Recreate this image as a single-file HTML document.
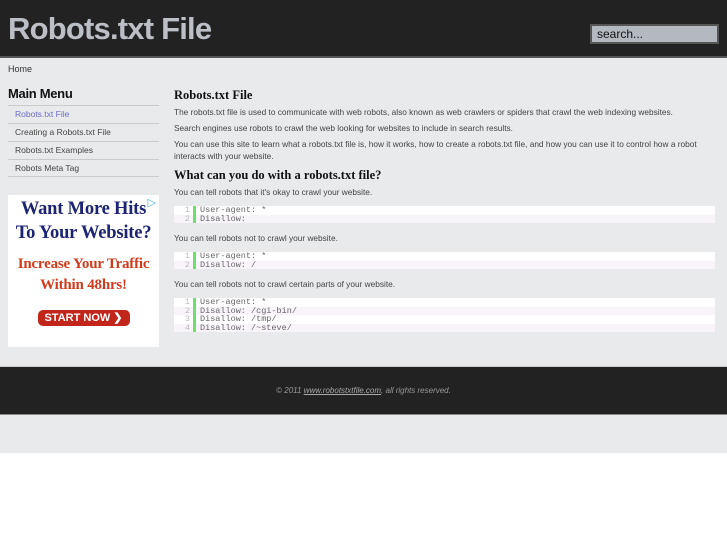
<!DOCTYPE html>
<html><head><style>
*{margin:0;padding:0;box-sizing:border-box}
body{width:727px;height:545px;background:#fff;font-family:"Liberation Sans",sans-serif;position:relative;overflow:hidden}
#hd{position:absolute;left:0;top:0;width:727px;height:58px;background:#222;border-bottom:2px solid #555}
#hd h1{position:absolute;left:8px;top:11px;font-size:31px;color:#bcc0c6;font-weight:bold;letter-spacing:-0.8px}
#srch{position:absolute;left:590px;top:24px;width:129px;height:20px;background:#b4b8bf;border:2px solid #555;font-size:12px;color:#111;padding:1px 5px}
#main{position:absolute;left:0;top:58px;width:727px;height:308px;background:#e9eaec}
.crumb{position:absolute;left:8px;top:6px;font-size:9px;color:#333}
#menu{position:absolute;left:8px;top:28px;width:151px}
#menu h2{font-size:13px;color:#111;font-weight:bold;margin-bottom:4px;letter-spacing:-0.3px}
#menu div{border-top:1px solid #c9cacc;font-size:8.5px;color:#444;height:18px;line-height:17px;padding-left:7px}
#menu div.last{border-bottom:1px solid #c9cacc}
#ad{position:absolute;left:8px;top:137px;width:151px;height:152px;background:#fff;font-family:"Liberation Serif",serif;text-align:center;font-weight:bold}
#ct{position:absolute;left:174px;top:30px;width:541px;font-size:8.3px;color:#444;line-height:12px}
#ct h3{font-family:"Liberation Serif",serif;font-size:12.5px;color:#111;margin-bottom:4px;line-height:14px}
#ct p{margin-bottom:4px}
.code{background:#fff;font-family:"Liberation Mono",monospace;font-size:8.5px;color:#666;margin:8px 0 9px;line-height:8.5px}
.code div{display:flex}
.code div:nth-child(even){background:#f8f4fa}
.code .n{width:22px;text-align:right;color:#bbb;padding-right:3px;border-right:3px solid #6ce06c;margin-right:4px}
#ft{position:absolute;left:0;top:366px;width:727px;height:49px;background:#222;border-top:1px solid #ccc;border-bottom:1px solid #888;text-align:center;font-size:8px;font-style:italic;color:#999;padding-top:19px}
#ft u{color:#aaa}
#gr{position:absolute;left:0;top:415px;width:727px;height:38px;background:#e9eaec}
</style></head><body>
<div id="hd"><h1>Robots.txt File</h1><div id="srch">search...</div></div>
<div id="main">
<div class="crumb">Home</div>
<div id="menu"><h2>Main Menu</h2>
<div style="color:#6a6acb">Robots.txt File</div><div>Creating a Robots.txt File</div><div>Robots.txt Examples</div><div class="last">Robots Meta Tag</div></div>
<div id="ad">
<div style="position:absolute;right:3px;top:1px;color:#3fb6e8;font-size:11px;font-family:'DejaVu Sans'">▷</div>
<div style="color:#1c2473;font-size:18.5px;line-height:24px;margin-top:2px;letter-spacing:-0.2px">Want More Hits<br>To Your Website?</div>
<div style="color:#d23a1c;font-size:15px;line-height:21px;margin-top:9px;letter-spacing:-0.2px">Increase Your Traffic<br>Within 48hrs!</div>
<div style="margin:14px auto 0;width:92px;height:16px;background:#c2261a;border-radius:5px;color:#fff;font-family:'Liberation Sans';font-size:11px;line-height:16px">START NOW ❯</div>
</div>
<div id="ct">
<h3>Robots.txt File</h3>
<p>The robots.txt file is used to communicate with web robots, also known as web crawlers or spiders that crawl the web indexing websites.</p>
<p>Search engines use robots to crawl the web looking for websites to include in search results.</p>
<p>You can use this site to learn what a robots.txt file is, how it works, how to create a robots.txt file, and how you can use it to control how a robot interacts with your website.</p>
<h3 style="margin-top:6px">What can you do with a robots.txt file?</h3>
<p>You can tell robots that it's okay to crawl your website.</p>
<div class="code"><div><span class="n">1</span>User-agent: *</div><div><span class="n">2</span>Disallow:</div></div>
<p>You can tell robots not to crawl your website.</p>
<div class="code"><div><span class="n">1</span>User-agent: *</div><div><span class="n">2</span>Disallow: /</div></div>
<p>You can tell robots not to crawl certain parts of your website.</p>
<div class="code"><div><span class="n">1</span>User-agent: *</div><div><span class="n">2</span>Disallow: /cgi-bin/</div><div><span class="n">3</span>Disallow: /tmp/</div><div><span class="n">4</span>Disallow: /~steve/</div></div>
</div>
</div>
<div id="ft">© 2011 <u>www.robotstxtfile.com</u>, all rights reserved.</div>
<div id="gr"></div>
</body></html>
